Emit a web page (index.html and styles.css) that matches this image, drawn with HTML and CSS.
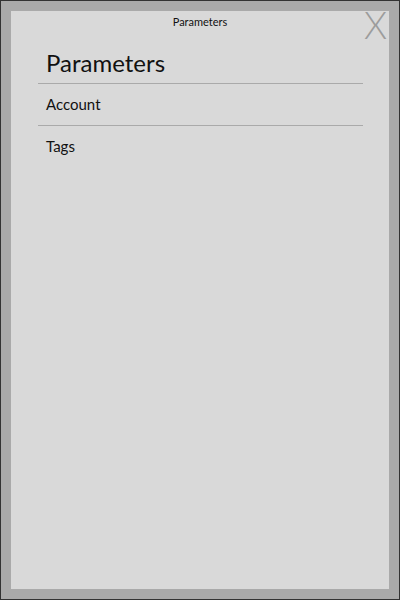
FILE: index.html
```html
<!DOCTYPE html>
<html>
<head>
<meta charset="utf-8">
<link rel="stylesheet" href="styles.css">
</head>
<body>
<div class="frame">
  <div class="panel">
    <div class="topbar">Parameters</div>
    <div class="close">X</div>
    <div class="list">
      <div class="heading">Parameters</div>
      <div class="item">Account</div>
      <div class="item">Tags</div>
    </div>
  </div>
</div>
</body>
</html>
```
FILE: styles.css
```css
html, body {
  margin: 0;
  padding: 0;
}
body {
  width: 400px;
  height: 600px;
  font-family: Lato, "Open Sans", sans-serif;
  color: #111;
}
.frame {
  box-sizing: border-box;
  width: 400px;
  height: 600px;
  border: 1px solid #333;
  background: #aaaaaa;
  padding: 10px;
}
.panel {
  position: relative;
  height: 578px;
  background: #d9d9d9;
}
.topbar {
  height: 20px;
  padding-top: 4px;
  box-sizing: border-box;
  text-align: center;
  font-size: 11px;
  line-height: 14px;
}
.close {
  position: absolute;
  top: -5px;
  right: 2px;
  font-size: 37px;
  line-height: 37px;
  font-weight: 300;
  color: #9c9c9c;
}
.list {
  margin: 0 26px 0 27px;
}
.heading {
  padding: 19px 0 7px 8px;
  font-size: 24px;
  line-height: 26px;
  border-bottom: 1px solid #aaa;
}
.item {
  padding: 10px 8px 11px 8px;
  font-size: 15px;
  line-height: 20px;
  border-bottom: 1px solid #aaa;
}
.item:last-child {
  border-bottom: none;
}
```
